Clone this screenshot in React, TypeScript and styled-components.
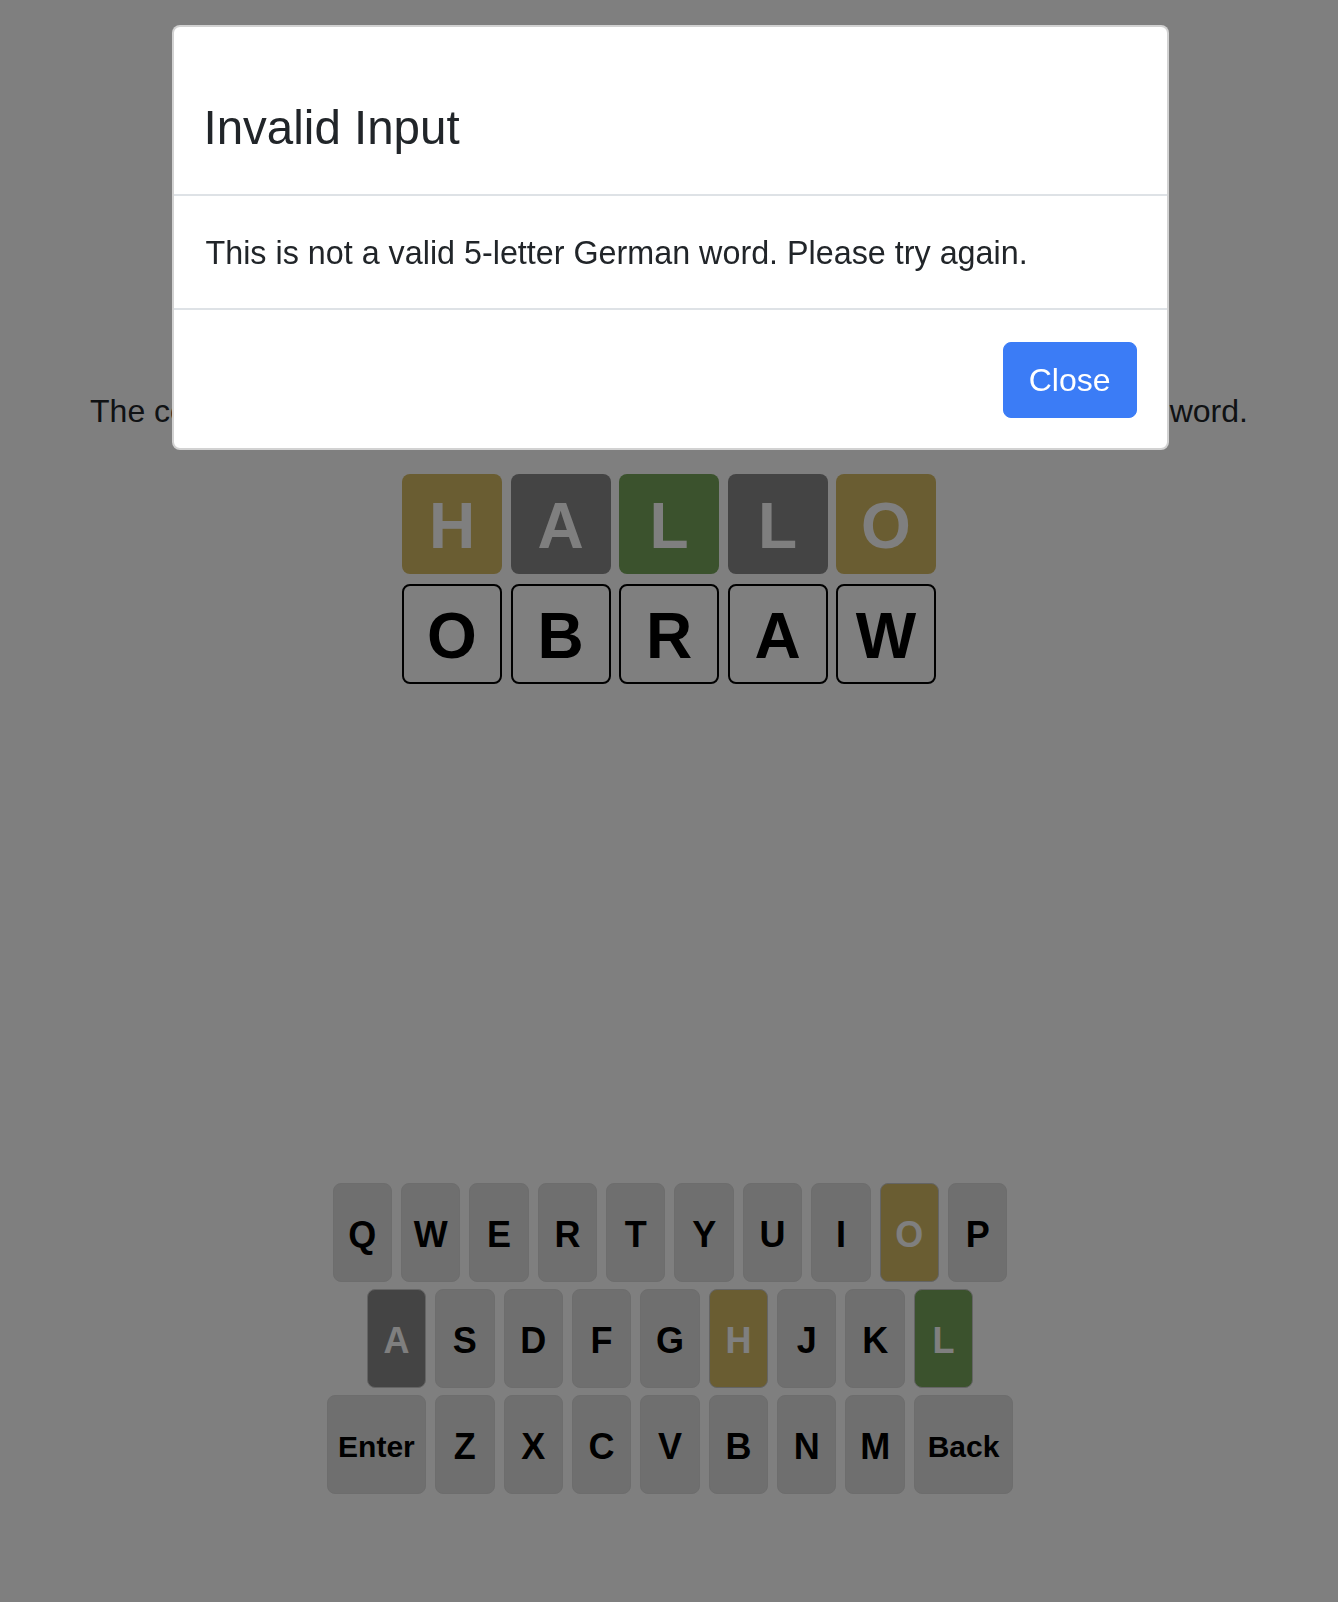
import React from "react";
import styled, { createGlobalStyle } from "styled-components";

const GlobalStyle = createGlobalStyle`
  html, body {
    margin: 0;
    padding: 0;
    background: #ffffff;
    color: #212529;
    font-family: "Liberation Sans", Arial, Helvetica, sans-serif;
  }
  * { box-sizing: border-box; }
`;

type TileState = "present" | "absent" | "correct" | "typed";
type KeyState = TileState | "idle";

const COLORS: Record<string, string> = {
  present: "#d5ba64",
  absent: "#888888",
  correct: "#76a55a",
  idle: "#dedede",
  typed: "transparent",
};

const Page = styled.main`
  min-height: 100vh;
  display: flex;
  flex-direction: column;
  align-items: center;
  padding: 387px 0 108px;
`;

const Intro = styled.p`
  margin: 0;
  font-size: 32px;
  line-height: 48px;
  text-align: center;
  white-space: nowrap;
`;

const Board = styled.div`
  margin-top: 39px;
  display: grid;
  grid-template-columns: repeat(5, 100px);
  column-gap: 8.5px;
  row-gap: 10px;
`;

const Tile = styled.div<{ $state: TileState }>`
  width: 100px;
  height: 100px;
  border-radius: 8px;
  display: flex;
  align-items: center;
  justify-content: center;
  padding-top: 3px;
  font-size: 64px;
  line-height: 1;
  font-weight: 700;
  background: ${(p) => COLORS[p.$state]};
  color: ${(p) => (p.$state === "typed" ? "#000000" : "#ffffff")};
  border: ${(p) => (p.$state === "typed" ? "2px solid #000000" : "none")};
`;

const Keyboard = styled.div`
  margin-top: auto;
  display: flex;
  flex-direction: column;
  align-items: center;
  gap: 6.5px;
  padding-left: 2px;
`;

const KeyRow = styled.div`
  display: flex;
  gap: 9px;
`;

const Key = styled.button<{ $state: KeyState; $wide?: boolean }>`
  width: ${(p) => (p.$wide ? "99.4px" : "59.4px")};
  height: 99.5px;
  border-radius: 8px;
  border: 1.5px solid ${(p) => (p.$state === "idle" ? "#dadada" : "#c8c8c8")};
  background: ${(p) => COLORS[p.$state]};
  color: ${(p) => (p.$state === "idle" ? "#000000" : "#ffffff")};
  font-family: "Liberation Sans", Arial, Helvetica, sans-serif;
  font-weight: 700;
  font-size: ${(p) => (p.$wide ? "30px" : "36px")};
  line-height: 1;
  padding: 5px 0 0;
  display: flex;
  align-items: center;
  justify-content: center;
`;

const Backdrop = styled.div`
  position: fixed;
  inset: 0;
  background: rgba(0, 0, 0, 0.5);
`;

const ModalLayer = styled.div`
  position: fixed;
  inset: 0;
  display: flex;
  justify-content: center;
  align-items: flex-start;
  padding: 25px 0 0 2px;
`;

const ModalContent = styled.div`
  width: 997px;
  background: #ffffff;
  border: 2px solid rgba(0, 0, 0, 0.175);
  border-radius: 8px;
  display: flex;
  flex-direction: column;
`;

const ModalHeader = styled.div`
  padding: 73px 32px 38px 30px;
  border-bottom: 2px solid #dee2e6;
`;

const ModalTitle = styled.h5`
  margin: 0;
  font-size: 47.5px;
  line-height: 56px;
  font-weight: 500;
  color: #212529;
`;

const ModalBody = styled.div`
  padding: 33px 32px 31px 32px;
  font-size: 32.3px;
  line-height: 48px;
  color: #212529;
  border-bottom: 2px solid #dee2e6;
`;

const ModalFooter = styled.div`
  display: flex;
  justify-content: flex-end;
  padding: 32px 30px 30px;
`;

const PrimaryButton = styled.button`
  font-family: "Liberation Sans", Arial, Helvetica, sans-serif;
  font-size: 32px;
  line-height: 48px;
  padding: 13px 25px;
  border: 1px solid #3b7cf6;
  border-radius: 8px;
  background: #3b7cf6;
  color: #ffffff;
`;

const guesses: { letter: string; state: TileState }[][] = [
  [
    { letter: "H", state: "present" },
    { letter: "A", state: "absent" },
    { letter: "L", state: "correct" },
    { letter: "L", state: "absent" },
    { letter: "O", state: "present" },
  ],
  [
    { letter: "O", state: "typed" },
    { letter: "B", state: "typed" },
    { letter: "R", state: "typed" },
    { letter: "A", state: "typed" },
    { letter: "W", state: "typed" },
  ],
];

const keyStates: Record<string, KeyState> = {
  O: "present",
  H: "present",
  A: "absent",
  L: "correct",
};

const rows = [
  ["Q", "W", "E", "R", "T", "Y", "U", "I", "O", "P"],
  ["A", "S", "D", "F", "G", "H", "J", "K", "L"],
  ["Enter", "Z", "X", "C", "V", "B", "N", "M", "Back"],
];

export default function App() {
  return (
    <>
      <GlobalStyle />
      <Page>
        <Intro>
          The computer has chosen a random 5-letter German word. Try to guess the word.
        </Intro>
        <Board>
          {guesses.flat().map((t, i) => (
            <Tile key={i} $state={t.state}>
              {t.letter}
            </Tile>
          ))}
        </Board>
        <Keyboard>
          {rows.map((row, ri) => (
            <KeyRow key={ri}>
              {row.map((k) => (
                <Key
                  key={k}
                  $state={keyStates[k] ?? "idle"}
                  $wide={k.length > 1}
                >
                  {k}
                </Key>
              ))}
            </KeyRow>
          ))}
        </Keyboard>
      </Page>
      <Backdrop />
      <ModalLayer>
        <ModalContent role="dialog">
          <ModalHeader>
            <ModalTitle>Invalid Input</ModalTitle>
          </ModalHeader>
          <ModalBody>
            This is not a valid 5-letter German word. Please try again.
          </ModalBody>
          <ModalFooter>
            <PrimaryButton>Close</PrimaryButton>
          </ModalFooter>
        </ModalContent>
      </ModalLayer>
    </>
  );
}
